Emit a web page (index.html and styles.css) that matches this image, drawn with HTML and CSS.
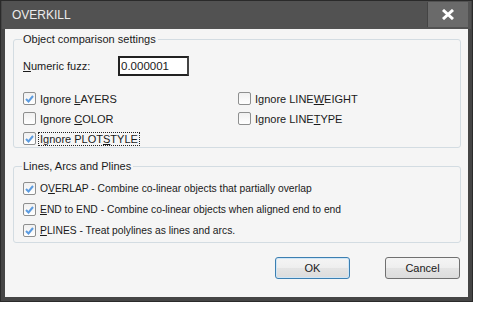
FILE: index.html
```html
<!DOCTYPE html>
<html>
<head>
<meta charset="utf-8">
<link rel="stylesheet" href="styles.css">
</head>
<body>
<div class="window">
  <div class="titlebar">
    <span class="title">OVERKILL</span>
    <span class="close">
      <svg width="14" height="11" viewBox="0 0 14 11"><path d="M2 1 L12 10 M12 1 L2 10" stroke="#fff" stroke-width="3"/></svg>
    </span>
  </div>
  <div class="client">
    <fieldset class="group g1">
      <legend>Object comparison settings</legend>
      <div class="fuzz">
        <span class="fuzz-label"><u>N</u>umeric fuzz:</span>
        <span class="input">0.000001</span>
      </div>
      <div class="checks">
        <div class="col">
          <label class="cb"><span class="box on"><svg width="9" height="8" viewBox="0 0 9 8"><path d="M1 4 L3.5 6.5 L8 1" stroke="#5b9be0" stroke-width="2" fill="none"/></svg></span><span>Ignore <u>L</u>AYERS</span></label>
          <label class="cb"><span class="box"></span><span>Ignore <u>C</u>OLOR</span></label>
          <label class="cb"><span class="box on"><svg width="9" height="8" viewBox="0 0 9 8"><path d="M1 4 L3.5 6.5 L8 1" stroke="#5b9be0" stroke-width="2" fill="none"/></svg></span><span class="focus">Ignore PLOT<u>S</u>TYLE</span></label>
        </div>
        <div class="col">
          <label class="cb"><span class="box"></span><span>Ignore LINE<u>W</u>EIGHT</span></label>
          <label class="cb"><span class="box"></span><span>Ignore LINE<u>T</u>YPE</span></label>
        </div>
      </div>
    </fieldset>
    <fieldset class="group g2">
      <legend>Lines, Arcs and Plines</legend>
      <label class="cb"><span class="box on"><svg width="9" height="8" viewBox="0 0 9 8"><path d="M1 4 L3.5 6.5 L8 1" stroke="#5b9be0" stroke-width="2" fill="none"/></svg></span><span>O<u>V</u>ERLAP - Combine co-linear objects that partially overlap</span></label>
      <label class="cb"><span class="box on"><svg width="9" height="8" viewBox="0 0 9 8"><path d="M1 4 L3.5 6.5 L8 1" stroke="#5b9be0" stroke-width="2" fill="none"/></svg></span><span><u>E</u>ND to END - Combine co-linear objects when aligned end to end</span></label>
      <label class="cb"><span class="box on"><svg width="9" height="8" viewBox="0 0 9 8"><path d="M1 4 L3.5 6.5 L8 1" stroke="#5b9be0" stroke-width="2" fill="none"/></svg></span><span><u>P</u>LINES - Treat polylines as lines and arcs.</span></label>
    </fieldset>
    <div class="buttons">
      <span class="btn default">OK</span>
      <span class="btn">Cancel</span>
    </div>
  </div>
</div>
</body>
</html>
```
FILE: styles.css
```css
html, body {
  margin: 0;
  padding: 0;
  background: #ffffff;
}
body {
  font-family: "Liberation Sans", Arial, sans-serif;
  font-size: 10.3px;
  color: #1a1a1a;
}
.window {
  width: 473px;
  height: 302px;
  box-sizing: border-box;
  background: #454545;
  border: 1px solid #2a2a2a;
  padding: 0 4px 4px 4px;
  display: flex;
  flex-direction: column;
}
.titlebar {
  height: 28px;
  flex: none;
  display: flex;
  align-items: center;
  justify-content: space-between;
  background: #525252;
  margin: 0 -3px;
  padding: 0 3px 0 10px;
}
.title {
  color: #ececec;
  font-size: 12px;
}
.close {
  width: 40px;
  height: 25px;
  background: #6a6a6a;
  border-left: 1px solid #444;
  display: flex;
  align-items: center;
  justify-content: center;
  margin-top: -2px;
}
.client {
  flex: 1;
  background: #f5f5f5;
  padding: 4px 7px 0 8px;
  display: flex;
  flex-direction: column;
}
.group {
  margin: 0;
  border: 1px solid #d3dce2;
  border-radius: 3px;
  padding: 0 8px 0 9px;
  flex: none;
}
.group legend {
  padding: 0 2px 0 1px;
  margin-left: -1px;
  font-size: 11px;
}
.g1 {
  height: 115px;
  box-sizing: border-box;
}
.fuzz {
  display: flex;
  align-items: center;
  margin-top: 11px;
}
.fuzz-label {
  width: 95px;
  font-size: 11px;
}
.input {
  width: 66px;
  height: 16px;
  border: 2px solid #222;
  border-right-color: #444;
  background: #fff;
  padding-left: 1px;
  line-height: 16px;
  font-size: 11.5px;
}
.checks {
  display: flex;
  margin-top: 16px;
}
.col {
  display: flex;
  flex-direction: column;
  gap: 7px;
}
.col:first-child {
  width: 215px;
}
.cb {
  display: flex;
  align-items: center;
  height: 13px;
  white-space: nowrap;
  font-size: 11px;
}
.g2 .cb {
  font-size: 10.3px;
}
.box {
  width: 11px;
  height: 11px;
  border: 1px solid #8e8f8f;
  border-radius: 2px;
  background: linear-gradient(#f0f0f0, #ffffff);
  margin-right: 4px;
  display: flex;
  align-items: center;
  justify-content: center;
  flex: none;
}
.focus {
  outline: 1px dotted #222;
  outline-offset: 0;
  padding: 0 1px;
  margin-left: -1px;
}
.g2 {
  margin-top: 12px;
  height: 83px;
  box-sizing: border-box;
  display: flex;
  flex-direction: column;
  gap: 8px;
  padding-top: 10px;
}
.buttons {
  display: flex;
  justify-content: flex-end;
  gap: 35px;
  margin-top: 14px;
  padding-right: 1px;
}
.btn {
  width: 73px;
  height: 20px;
  border: 1px solid #707070;
  border-radius: 3px;
  background: linear-gradient(#f4f4f4, #eeeeee 50%, #e4e4e4 51%, #dcdcdc);
  display: flex;
  align-items: center;
  justify-content: center;
  font-size: 11px;
}
.btn.default {
  border-color: #3c7fb1;
  box-shadow: inset 0 0 0 1px #cfe6f7;
}
```
